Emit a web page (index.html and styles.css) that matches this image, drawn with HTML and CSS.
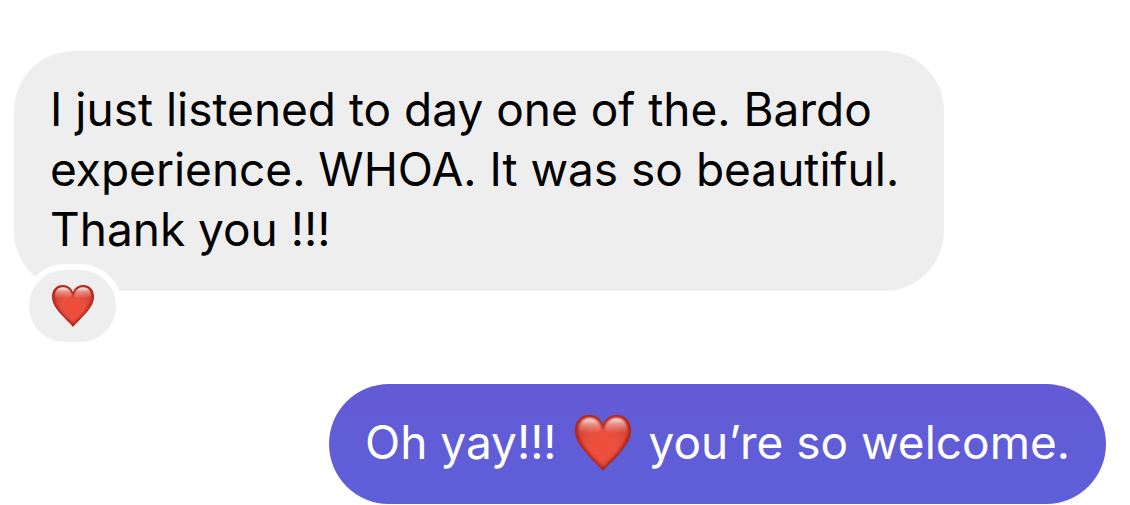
FILE: index.html
```html
<!DOCTYPE html>
<html lang="en">

<head>
    <meta charset="UTF-8">
    <meta name="viewport" content="width=device-width, initial-scale=1.0">
    <title>Messages</title>
    <link rel="stylesheet" href="styles.css">
</head>

<body>
    <svg class="defs" aria-hidden="true">
        <defs>
            <radialGradient id="heartFill" gradientUnits="userSpaceOnUse" cx="28" cy="30" r="30">
                <stop offset="0" stop-color="#f04c38" />
                <stop offset="0.5" stop-color="#e85040" />
                <stop offset="1" stop-color="#cf3e30" />
            </radialGradient>
            <linearGradient id="heartShine" x1="0" y1="0" x2="0" y2="1">
                <stop offset="0" stop-color="#fff" stop-opacity="0.95" />
                <stop offset="0.4" stop-color="#fff" stop-opacity="0.4" />
                <stop offset="1" stop-color="#fff" stop-opacity="0" />
            </linearGradient>
            <filter id="soft" x="-20%" y="-20%" width="140%" height="140%">
                <feGaussianBlur stdDeviation="1.8" />
            </filter>
            <filter id="softShine" x="-20%" y="-20%" width="140%" height="140%">
                <feGaussianBlur stdDeviation="0.9" />
            </filter>
            <path id="heartShape" d="M28 56C24 51 17 45 12 39C5 31 0 24 0 15.500C0 6 6 0 14.500 0C21 0 26 4 28 9.500C30 4 35 0 41.500 0C50 0 56 6 56 15.500C56 24 51 31 44 39C39 45 32 51 28 56Z" />
            <clipPath id="heartClip"><use href="#heartShape" /></clipPath>
            <symbol id="heart" viewBox="0 0 56 56">
                <g clip-path="url(#heartClip)">
                    <use href="#heartShape" fill="url(#heartFill)" />
                    <use href="#heartShape" fill="none" stroke="#a81c11" stroke-width="4" filter="url(#soft)" />
                    <path fill="url(#heartShine)" filter="url(#softShine)" d="M4 17C3 8 8 3 14.500 3C21 3 25 7 27 14C25 18 8 19 4 17Z" />
                    <path fill="url(#heartShine)" filter="url(#softShine)" d="M52 17C53 8 48 3 41.500 3C35 3 31 7 29 14C31 18 48 19 52 17Z" />
                </g>
            </symbol>
        </defs>
    </svg>

    <main class="chat">
        <div class="message received">
            <p class="bubble">I just listened to day one of the. Bardo experience. WHOA. It was so beautiful. Thank you !!!</p>
            <span class="reaction">
                <svg class="heart" role="img" aria-label="Heart"><use href="#heart" /></svg>
            </span>
        </div>
        <div class="message sent">
            <p class="bubble">Oh yay!!! <svg class="heart" role="img" aria-label="Heart"><use href="#heart" /></svg> you’re so welcome.</p>
        </div>
    </main>
</body>

</html>
```

FILE: styles.css
```css
body {
    margin: 0;
    background-color: #fff;
    font-family: Inter, "Liberation Sans", sans-serif;
    font-size: 46px;
    line-height: 60px;
    color: #000;
}

.defs {
    position: absolute;
    width: 0;
    height: 0;
}

.chat {
    display: flex;
    flex-direction: column;
    gap: 93px;
    padding: 51px 24px 0 14px;
}

.message {
    position: relative;
    max-width: 930px;
}

.bubble {
    margin: 0;
    padding: 28px 36px 32px;
    border-radius: 60px;
}

.received {
    align-self: flex-start;
}

.received .bubble {
    background-color: #eee;
}

.sent {
    align-self: flex-end;
}

.sent .bubble {
    background: linear-gradient(#645ad5, #5d5fd9);
    color: #fff;
}

.reaction {
    position: absolute;
    left: 9px;
    bottom: -57px;
    display: flex;
    align-items: center;
    justify-content: center;
    width: 87px;
    height: 72px;
    border: 6px solid #fff;
    border-radius: 42px;
    background-color: #eee;
}

.heart {
    width: 42px;
    height: 42px;
}

.bubble .heart {
    width: 56px;
    height: 56px;
    margin: 0 5px;
    vertical-align: -12px;
}
```
